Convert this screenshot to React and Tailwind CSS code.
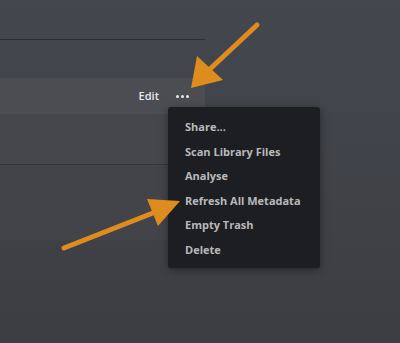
export default function App() {
  const items = ["Share...", "Scan Library Files", "Analyse", "Refresh All Metadata", "Empty Trash", "Delete"];
  return (
    <div
      className="relative w-[400px] h-[343px] overflow-hidden bg-gradient-to-b from-[#45474e] to-[#3c3e44]"
      style={{ fontFamily: '"Open Sans", "Noto Sans", sans-serif' }}
    >
      <div className="flex flex-col w-[205px]">
        <div className="h-[39px]" />
        <div className="h-px bg-[#2c2e33]" />
        <div className="h-[38px]" />
        <div className="h-[36px] bg-[#4b4d53] flex items-center justify-end pr-[16px] gap-[17px]">
          <span className="text-[11px] font-semibold text-[#e8e8e8]">Edit</span>
          <span className="flex gap-[2px] items-center">
            <span className="w-[3px] h-[3px] rounded-full bg-[#e8e8e8]" />
            <span className="w-[3px] h-[3px] rounded-full bg-[#e8e8e8]" />
            <span className="w-[3px] h-[3px] rounded-full bg-[#e8e8e8]" />
          </span>
        </div>
        <div className="h-[50px] bg-[#45474d]" />
        <div className="h-px bg-[#34363b]" />
        <div className="h-[75px] bg-[#42444a]" />
      </div>

      <div className="absolute left-[168px] top-[107px] w-[152px] h-[161px] rounded-[3px] bg-[#1d1e21] shadow-[0_2px_8px_rgba(0,0,0,0.4)] pt-[8px] flex flex-col">
        {items.map((t) => (
          <div key={t} className="h-[24.6px] flex items-center pl-[17px] text-[11px] font-bold text-[#b9b9bb]">
            {t}
          </div>
        ))}
      </div>

      <svg className="absolute left-0 top-0" width="400" height="343" viewBox="0 0 400 343">
        <line x1="257" y1="25" x2="210" y2="69" stroke="#de8c1e" strokeWidth="5" strokeLinecap="round" />
        <polygon points="191,88 197,56 223,80" fill="#de8c1e" />
        <line x1="64" y1="248" x2="158" y2="211" stroke="#de8c1e" strokeWidth="5" strokeLinecap="round" />
        <polygon points="180,201 147,199 158,226" fill="#de8c1e" />
      </svg>
    </div>
  );
}
